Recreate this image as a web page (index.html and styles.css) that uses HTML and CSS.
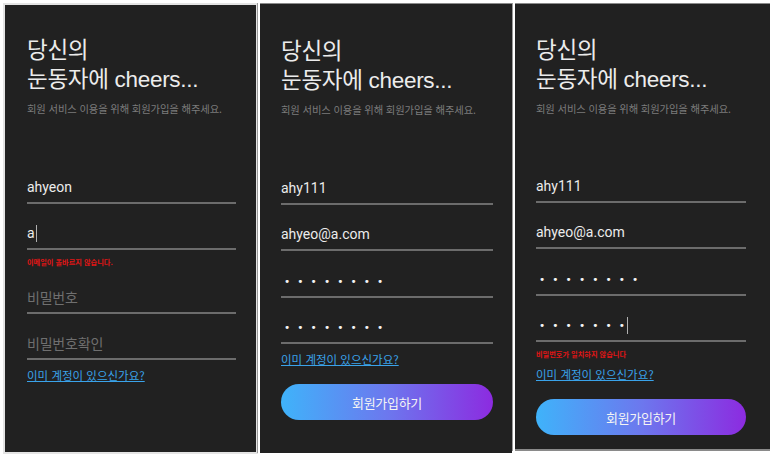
FILE: index.html
```html
<!DOCTYPE html>
<html lang="ko">
<head>
<meta charset="utf-8">
<title>회원가입</title>
<link rel="stylesheet" href="styles.css">
</head>
<body>
<div class="screens">
  <section class="panel panel-1">
    <h1 class="title">당신의<br>눈동자에 cheers...</h1>
    <p class="subtitle">회원 서비스 이용을 위해 회원가입을 해주세요.</p>
    <div class="form">
      <div class="field"><span class="value">ahyeon</span></div>
      <div class="field"><span class="value">a</span><span class="caret"></span></div>
      <p class="error">이메일이 올바르지 않습니다.</p>
      <div class="field"><span class="placeholder">비밀번호</span></div>
      <div class="field"><span class="placeholder">비밀번호확인</span></div>
      <a class="login-link" href="#">이미 계정이 있으신가요?</a>
    </div>
  </section>

  <section class="panel panel-2">
    <h1 class="title">당신의<br>눈동자에 cheers...</h1>
    <p class="subtitle">회원 서비스 이용을 위해 회원가입을 해주세요.</p>
    <div class="form">
      <div class="field"><span class="value">ahy111</span></div>
      <div class="field"><span class="value">ahyeo@a.com</span></div>
      <div class="field"><span class="dots">••••••••</span></div>
      <div class="field"><span class="dots">••••••••</span></div>
      <a class="login-link" href="#">이미 계정이 있으신가요?</a>
      <button class="submit" type="button">회원가입하기</button>
    </div>
  </section>

  <section class="panel panel-3">
    <h1 class="title">당신의<br>눈동자에 cheers...</h1>
    <p class="subtitle">회원 서비스 이용을 위해 회원가입을 해주세요.</p>
    <div class="form">
      <div class="field"><span class="value">ahy111</span></div>
      <div class="field"><span class="value">ahyeo@a.com</span></div>
      <div class="field"><span class="dots">••••••••</span></div>
      <div class="field"><span class="dots dots-short">•••••••</span><span class="caret"></span></div>
      <p class="error">비밀번호가 일치하지 않습니다</p>
      <a class="login-link" href="#">이미 계정이 있으신가요?</a>
      <button class="submit" type="button">회원가입하기</button>
    </div>
  </section>
</div>
</body>
</html>
```

FILE: styles.css
```css
* { box-sizing: border-box; }

html, body {
  margin: 0;
  padding: 0;
  background: #ffffff;
}

body {
  font-family: "Noto Sans CJK KR", "Noto Sans", sans-serif;
  width: 778px;
  height: 461px;
  overflow: hidden;
}

.screens {
  display: flex;
  align-items: flex-start;
}

.panel {
  background: #212121;
  display: flex;
  flex-direction: column;
}

.panel-1 {
  width: 251px;
  height: 447px;
  margin: 5px 0 0 5px;
  padding: 31px 20px 0 22px;
  box-shadow: 0 0 0 2px #e4e4e4;
}

.panel-2 {
  width: 252px;
  height: 450px;
  margin: 3px 0 0 4px;
  padding: 33px 19px 0 21px;
  border-top: 1px solid #8a8a8a;
  box-shadow: -2px 0 0 0 #ffffff, -3px 0 0 0 #9a9a9a;
}

.panel-3 {
  width: 255px;
  height: 448px;
  margin: 3px 0 0 3px;
  padding: 32px 24px 0 21px;
  border-top: 1px solid #8a8a8a;
  border-bottom: 2px solid #8a8a8a;
  box-shadow: -2px 0 0 0 #ffffff, -3px 0 0 0 #9a9a9a;
}

.title {
  margin: 0;
  font-family: "Liberation Sans", "Noto Sans CJK KR", sans-serif;
  font-weight: 400;
  font-size: 22.5px;
  line-height: 29px;
  color: #ececec;
  letter-spacing: -0.3px;
}

.subtitle {
  margin: 7px 0 0;
  font-size: 10.3px;
  line-height: 16px;
  color: #7c7c7c;
  letter-spacing: -0.1px;
}

.form {
  margin-top: 40px;
  display: flex;
  flex-direction: column;
}

.panel-3 .form {
  margin-top: 39px;
}

.field {
  display: flex;
  align-items: center;
  padding-top: 19.5px;
  padding-bottom: 5px;
  line-height: 20px;
  height: 46.5px;
  border-bottom: 2px solid #6c6c6c;
}

.value {
  font-family: Roboto, "Noto Sans CJK KR", sans-serif;
  font-size: 14px;
  color: #ececec;
}

.placeholder {
  font-size: 14px;
  color: #6f6f6f;
  letter-spacing: -0.2px;
}

.dots {
  font-family: "DejaVu Sans", sans-serif;
  font-size: 10.5px;
  color: #f4f4f4;
  letter-spacing: 7.1px;
  padding-left: 3px;
  line-height: 20px;
}

.caret {
  display: inline-block;
  width: 1px;
  height: 17px;
  background: #b0b0b0;
  margin-left: 1px;
}

.dots-short + .caret {
  margin-left: -5px;
}

.error {
  margin: 7px 0 0;
  font-size: 7.2px;
  line-height: 10px;
  color: #e01515;
  font-weight: 700;
}

.login-link {
  margin-top: 6px;
  font-size: 11.5px;
  line-height: 18px;
  color: #3aa3ea;
  text-decoration: underline;
  align-self: flex-start;
}

.submit {
  margin-top: 16px;
  height: 36px;
  border: 0;
  border-radius: 18px;
  background: linear-gradient(90deg, #3fb3fa 0%, #6c78ee 50%, #8c2be0 100%);
  color: #f4f4f4;
  font-family: "Noto Sans CJK KR", sans-serif;
  font-size: 13px;
  letter-spacing: -0.3px;
  padding: 0;
}
```
